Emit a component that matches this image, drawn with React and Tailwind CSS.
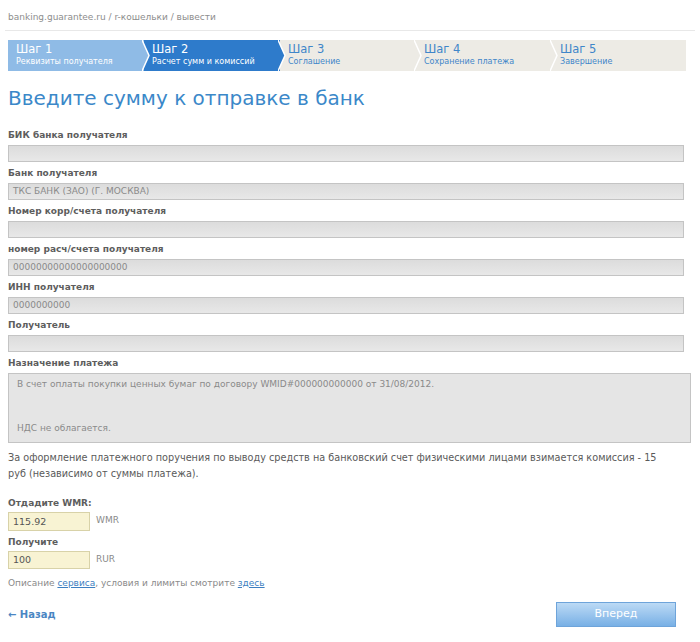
import React from 'react';

const steps = [
  { n: 'Шаг 1', t: 'Реквизиты получателя', state: 'done' },
  { n: 'Шаг 2', t: 'Расчет сумм и комиссий', state: 'active' },
  { n: 'Шаг 3', t: 'Соглашение', state: 'todo' },
  { n: 'Шаг 4', t: 'Сохранение платежа', state: 'todo' },
  { n: 'Шаг 5', t: 'Завершение', state: 'todo' },
];

const fills = { done: '#8fbbe6', active: '#2e7bcb', todo: '#edebe5' };

function Step({ step, last }) {
  const bg =
    step.state === 'done' ? 'bg-[#8fbbe6] text-white' : step.state === 'active' ? 'bg-[#2e7bcb] text-white' : 'bg-[#edebe5] text-[#3f86c9]';
  return (
    <div className={`relative h-full w-[136px] pl-[8px] pt-[4px] leading-none ${bg} ${last ? 'flex-1' : ''}`}>
      <div className="text-[11.5px]">{step.n}</div>
      <div className="mt-[3px] text-[8px]">{step.t}</div>
      {!last && (
        <svg className="absolute -right-[7px] top-0 z-10" width="9" height="31" viewBox="0 0 9 31">
          <polygon points="0,0 7,15.5 0,31" fill={fills[step.state]} />
          <polyline points="0,0 7,15.5 0,31" fill="none" stroke="#fff" strokeWidth="1.5" />
        </svg>
      )}
    </div>
  );
}

function Label({ children, className = '' }) {
  return <div className={`h-[15px] text-[9px] font-bold leading-[15px] text-[#5d5d5d] ${className}`}>{children}</div>;
}

function Field({ label, value }) {
  return (
    <div className="mb-[4px]">
      <Label className="mb-[2px]">{label}</Label>
      <div className="h-[17px] w-[676px] border border-[#c4c4c4] bg-gradient-to-b from-[#dcdcdc] to-[#e8e8e8] px-[4px] text-[9px] leading-[15px] text-[#8a8a8a]">
        {value}
      </div>
    </div>
  );
}

export default function App() {
  return (
    <div className="min-h-[642px] w-[700px] bg-white font-['DejaVu_Sans',Verdana,sans-serif]">
      <div className="mx-[5px] border-b border-[#e8e8e8] pt-[11px] pb-[5px] pl-[3px] text-[9px] text-[#8d8d8d]">
        banking.guarantee.ru / r-кошельки / вывести
      </div>

      <div className="ml-[8px] mt-[9px] flex h-[31px] w-[678px]">
        {steps.map((s, i) => (
          <Step key={s.n} step={s} last={i === steps.length - 1} />
        ))}
      </div>

      <div className="px-[8px]">
        <h1 className="mt-[14px] mb-[17px] text-[20px] leading-[26px] text-[#3b88c9]">Введите сумму к отправке в банк</h1>

        <Field label="БИК банка получателя" value="" />
        <Field label="Банк получателя" value="ТКС БАНК (ЗАО) (Г. МОСКВА)" />
        <Field label="Номер корр/счета получателя" value="" />
        <Field label="номер расч/счета получателя" value="00000000000000000000" />
        <Field label="ИНН получателя" value="0000000000" />
        <Field label="Получатель" value="" />

        <Label className="mb-[2px]">Назначение платежа</Label>
        <div className="flex h-[70px] w-[683px] flex-col justify-between border border-[#c4c4c4] bg-[#e5e5e5] px-[8px] pt-[4px] pb-[6px] text-[9px] text-[#8a8a8a]">
          <div>В счет оплаты покупки ценных бумаг по договору WMID#000000000000 от 31/08/2012.</div>
          <div>НДС не облагается.</div>
        </div>

        <p className="mt-[7px] w-[668px] text-[9.7px] leading-[16px] text-[#5a5a5a]">
          За оформление платежного поручения по выводу средств на банковский счет физическими лицами взимается комиссия - 15 руб (независимо от суммы платежа).
        </p>

        <Label className="mt-[14px] mb-[1px]">Отдадите WMR:</Label>
        <div className="flex items-center">
          <div className="h-[19px] w-[82px] border border-[#d8d2a8] bg-[#f8f3d3] px-[4px] text-[9.5px] leading-[17px] text-[#555]">115.92</div>
          <span className="ml-[6px] text-[9px] text-[#8a8a8a]">WMR</span>
        </div>
        <Label className="mt-[4px] mb-[1px]">Получите</Label>
        <div className="flex items-center">
          <div className="h-[18px] w-[82px] border border-[#d8d2a8] bg-[#f8f3d3] px-[4px] text-[9.5px] leading-[16px] text-[#555]">100</div>
          <span className="ml-[6px] text-[9px] text-[#8a8a8a]">RUR</span>
        </div>

        <p className="mt-[7px] text-[9px] leading-[14px] text-[#8a8a8a]">
          Описание <a className="text-[#3d7fc1] underline">сервиса</a>, условия и лимиты смотрите{' '}
          <a className="text-[#3d7fc1] underline">здесь</a>
        </p>

        <div className="mt-[12px] flex items-center justify-between pr-[16px]">
          <a className="text-[10px] font-bold text-[#4a86c3]">← Назад</a>
          <button className="h-[25px] w-[120px] border border-[#6ea4da] bg-gradient-to-b from-[#bcdaf5] to-[#78b0e5] text-[11px] text-white">
            Вперед
          </button>
        </div>
      </div>
    </div>
  );
}
